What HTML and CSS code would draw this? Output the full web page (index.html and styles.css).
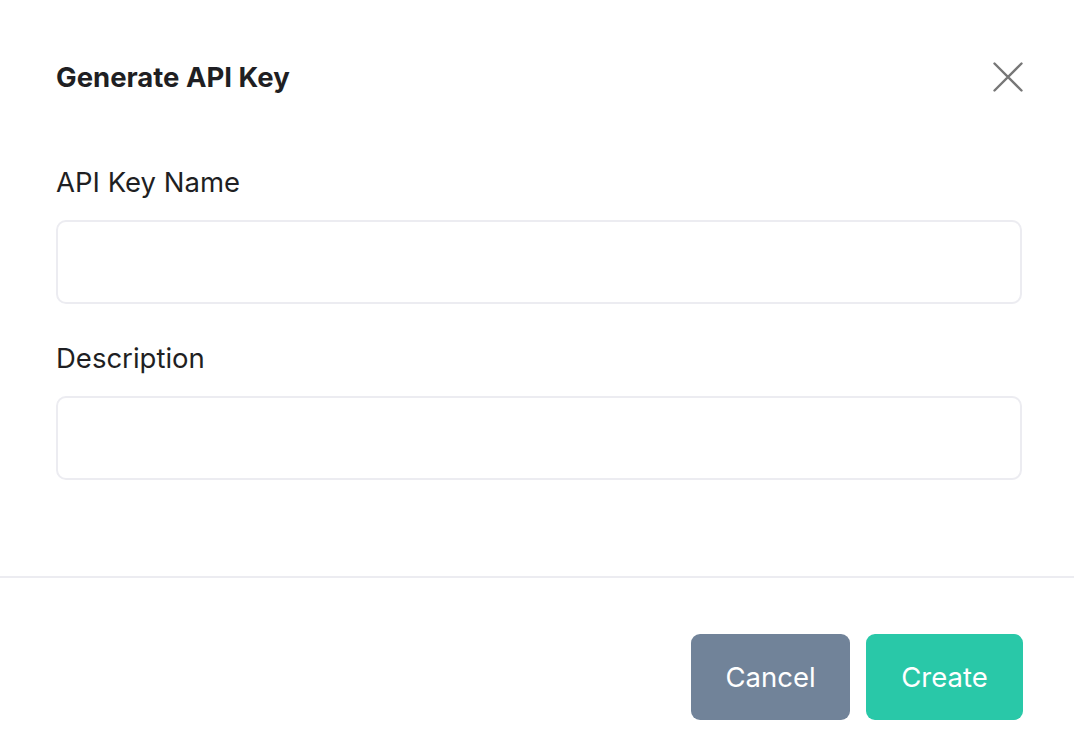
FILE: index.html
```html
<!DOCTYPE html>
<html lang="en">
<head>
<meta charset="utf-8">
<title>Generate API Key</title>
<link rel="stylesheet" href="styles.css">
</head>
<body>
<div class="modal">
  <div class="modal-header">
    <h2 class="modal-title">Generate API Key</h2>
    <button class="close-btn" aria-label="Close">
      <svg width="30" height="30" viewBox="0 0 30 30" fill="none" stroke="#777777" stroke-width="2.4" stroke-linecap="round">
        <path d="M1.5 1.5 L28.5 28.5 M28.5 1.5 L1.5 28.5"/>
      </svg>
    </button>
  </div>
  <div class="modal-body">
    <div class="field">
      <label class="field-label">API Key Name</label>
      <input class="field-input" type="text">
    </div>
    <div class="field">
      <label class="field-label">Description</label>
      <input class="field-input" type="text">
    </div>
  </div>
  <div class="modal-footer">
    <button class="btn btn-cancel">Cancel</button>
    <button class="btn btn-create">Create</button>
  </div>
</div>
</body>
</html>
```
FILE: styles.css
```css
* { box-sizing: border-box; }
html, body { margin: 0; padding: 0; background: #ffffff; }
body {
  font-family: Inter, "Noto Sans", sans-serif;
  color: #1f1f23;
  width: 1074px;
  height: 750px;
  overflow: hidden;
}
.modal { width: 1074px; }
.modal-header {
  display: flex;
  justify-content: space-between;
  align-items: center;
  height: 44px;
  margin-top: 55px;
  padding: 0 51px 0 56px;
}
.modal-title {
  margin: 0;
  font-size: 27.5px;
  font-weight: 700;
  line-height: 36px;
  color: #1f1f23;
}
.close-btn {
  border: 0;
  background: none;
  padding: 0;
  width: 30px;
  height: 30px;
  display: flex;
  cursor: pointer;
}
.modal-body {
  padding: 65px 52px 0 56px;
  display: flex;
  flex-direction: column;
  gap: 36px;
  height: 477px;
}
.field { display: flex; flex-direction: column; gap: 20px; }
.field-label {
  font-size: 27.5px;
  line-height: 36px;
  color: #1f1f23;
}
.field-input {
  height: 84px;
  width: 100%;
  border: 2px solid #ececf1;
  border-radius: 10px;
  background: #fff;
  font-family: inherit;
  font-size: 24px;
  padding: 0 20px;
  outline: none;
  margin: 0;
}
.modal-footer {
  border-top: 2px solid #ececf1;
  display: flex;
  justify-content: flex-end;
  gap: 16px;
  padding: 56px 51px 0 0;
}
.btn {
  height: 86px;
  border: 0;
  border-radius: 9px;
  color: #ffffff;
  font-family: inherit;
  font-size: 27.5px;
  font-weight: 400;
  cursor: pointer;
}
.btn-cancel { background: #718399; width: 159px; }
.btn-create { background: #29c8a8; width: 157px; }
```
